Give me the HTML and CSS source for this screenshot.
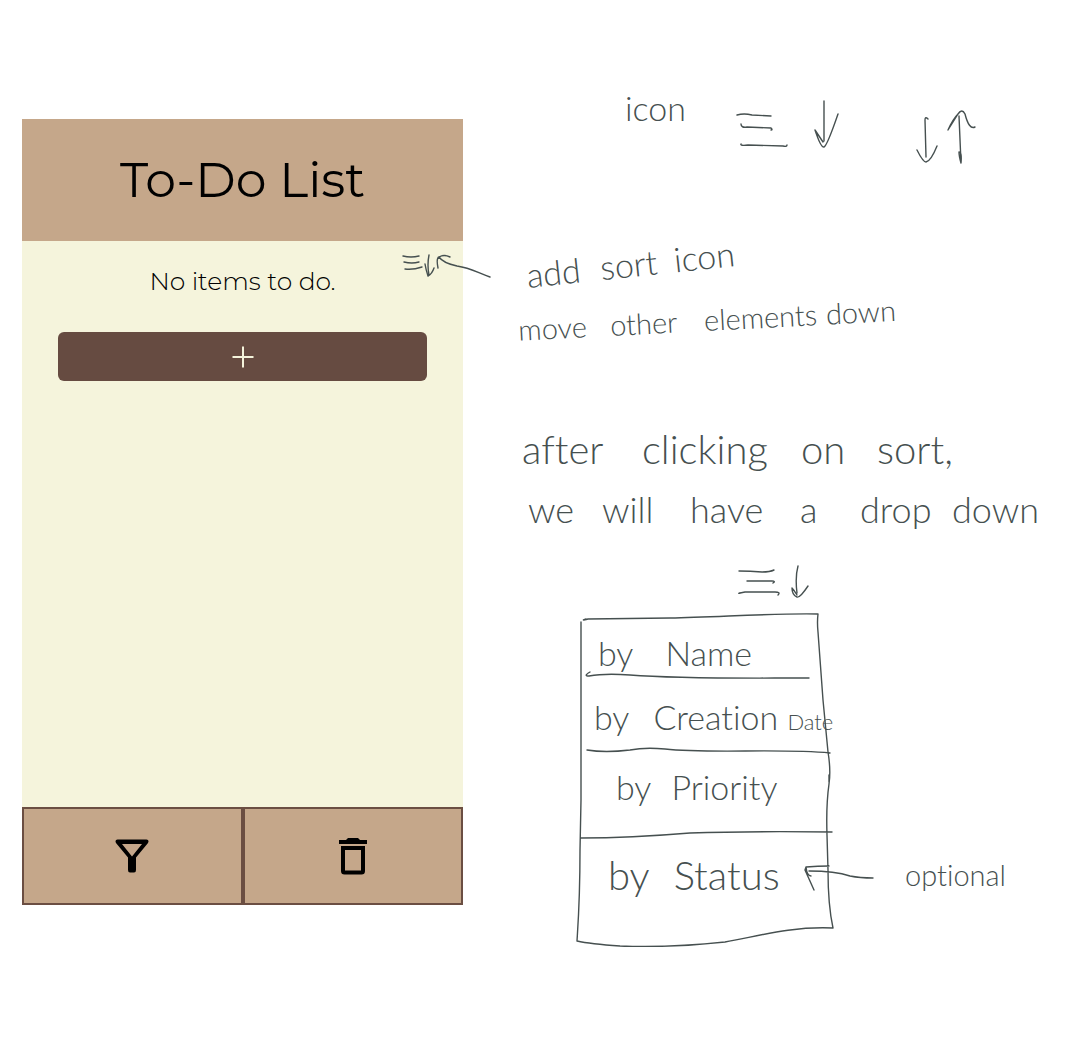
FILE: index.html
```html
<!DOCTYPE html>
<html lang="en">
<head>
<meta charset="utf-8">
<meta name="viewport" content="width=device-width, initial-scale=1">
<title>To-Do List</title>
<link rel="stylesheet" href="styles.css">
</head>
<body>
<main class="board">
  <section class="app">
    <header class="app-header"><h1>To-Do List</h1></header>
    <div class="app-body">
      <p class="empty">No items to do.</p>
      <button class="add" type="button" aria-label="Add item">
        <svg width="22" height="22" viewBox="0 0 22 22"><path d="M11 0.500V21.500M0.500 11H21.500" fill="none" stroke="#f5f4dc" stroke-width="2"/></svg>
      </button>
    </div>
    <footer class="app-footer">
      <button type="button" aria-label="Filter">
        <svg width="34" height="34" viewBox="0 0 34 34"><path fill-rule="evenodd" d="M2.500 0.500H31.500Q34.500 1 33 4L21 18.500V31Q21 33.500 19 33.500H15Q13 33.500 13 31V18.500L1 4Q-0.500 1 2.500 0.500ZM7 5L17 17.500L27 5Z"/></svg>
      </button>
      <button type="button" aria-label="Delete">
        <svg width="30" height="38" viewBox="0 0 30 38"><path fill-rule="evenodd" d="M1 3H8L10 1H20L22 3H29V7H1ZM3 9H27V34Q27 37.500 23.500 37.500H6.500Q3 37.500 3 34ZM7 13V33.500H23V13Z"/></svg>
      </button>
    </footer>
    <svg class="ink pointer" width="90" height="28" viewBox="402 252 90 28"><path d="M403 256Q411 258 419 256M404 262Q412 264 419 262M405 269Q413 270 422 267M429 255Q427 265 429 275M425 264Q426 270 428 276Q432 274 434 268M438 268Q436 258 439 257Q444 254 450 257M439 257Q443 263 457 266C471 268 478 273 490 277"/></svg>
  </section>

  <section class="notes">
    <div class="row-icons">
      <span class="hand medium">icon</span>
      <svg class="ink" width="242" height="70" viewBox="736 96 242 70"><path d="M737 115Q744 113 752 115L771 116M741 124Q741 128 747 127L771 128Q773 130 771 130M741 144Q740 146 748 145L783 146Q787 147 787 145M824 101V141M815 130L823 142M815 130Q821 148 824 147Q827 146 838 114M928 119Q925 116 925 120L926 157M917 150Q923 162 926 162Q931 161 937 146M961 163Q959 156 959 152Q962 152 961 163L959 116M948 130L958 114Q962 108 965 114Q969 130 975 127M948 130Q953 119 958 114"/></svg>
    </div>

    <div class="note note-add">
      <p class="hand medium line line-add"><span>add</span> <span>sort</span> <span>icon</span></p>
      <p class="hand small line line-move"><span>move</span> <span>other</span> <span>elements</span> <span>down</span></p>
    </div>

    <div class="note note-after">
      <p class="hand line line-after"><span>after</span> <span>clicking</span> <span>on</span> <span>sort,</span></p>
      <p class="hand line line-we"><span>we</span> <span>will</span> <span>have</span> <span>a</span> <span>drop</span> <span>down</span></p>
    </div>

    <svg class="ink sort-icon" width="72" height="36" viewBox="738 564 72 36"><path d="M739 571Q750 571 762 572Q770 572 774 570M747 581L772 581Q776 581 773 583M740 593Q736 594 745 592L775 592Q781 592 778 595M798 566Q795 577 797 593M792 588Q792 595 797 597Q800 598 808 586M792 588Q794 590 797 595"/></svg>

    <div class="dropdown">
      <ul class="menu">
        <li><button class="hand medium" type="button"><span>by</span> <span>Name</span></button></li>
        <li><button class="hand medium" type="button"><span>by</span> <span>Creation <small>Date</small></span></button></li>
        <li><button class="hand medium" type="button"><span>by</span> <span>Priority</span></button></li>
        <li><button class="hand" type="button"><span>by</span> <span>Status</span></button></li>
      </ul>
      <span class="hand small optional">optional</span>
      <svg class="ink frame" width="300" height="334" viewBox="576 613 300 334"><path d="M586 619Q580 621 588 619L670 618C720 617 775 613 818 614Q817 622 818 632L823 700L828 752Q831 770 829 784Q826 805 827 835L828 870Q828 905 833 928C790 926 755 937 725 942Q670 948 620 946Q590 944 577 941C578 925 580 900 580 850L581 800V622M590 672Q583 676 589 676Q605 673 630 675C680 679 740 678 809 678M587 750Q605 753 630 750Q645 747 665 749C710 754 780 748 830 753M581 838Q630 838 690 833Q750 831 832 832M829 775V782M829 866Q818 866 806 867L805 870L814 890M806 867Q807 876 811 876M809 871Q835 871 850 876Q860 878 873 878"/></svg>
    </div>
  </section>
</main>
</body>
</html>
```
FILE: styles.css
```css
* { box-sizing: border-box; }

body {
  margin: 0;
  background: #fff;
  color: #000;
  font-family: Montserrat, Inter, "Liberation Sans", sans-serif;
}

h1, p, ul { margin: 0; padding: 0; }

button {
  border: 0;
  background: none;
  color: inherit;
  font: inherit;
  cursor: pointer;
}

svg { display: block; flex: none; }

.board {
  display: grid;
  grid-template-columns: 441fr 613fr;
  min-height: 100vh;
  padding-left: 22px;
}

/* App window */
.app {
  position: relative;
  display: flex;
  flex-direction: column;
  margin: 119px 0 159px;
  background: #f5f4dc;
}

.app-header {
  padding: 30px 16px;
  background: #c5a78a;
  text-align: center;
}

.app-header h1 {
  font-size: 49px;
  font-weight: 400;
  line-height: 62px;
}

.app-body {
  flex: 1;
  padding: 24px 36px;
}

.empty {
  font-size: 25px;
  font-weight: 300;
  line-height: 32px;
  text-align: center;
}

.add {
  display: flex;
  align-items: center;
  justify-content: center;
  width: 100%;
  height: 49px;
  margin-top: 35px;
  border-radius: 6px;
  background: #664b41;
}

.app-footer {
  display: grid;
  grid-template-columns: 1fr 1fr;
  gap: 4px;
  padding: 2px;
  background: #6b4e42;
}

.app-footer button {
  display: flex;
  align-items: center;
  justify-content: center;
  height: 94px;
  background: #c5a78a;
}

/* Handwritten notes */
.ink {
  fill: none;
  stroke: #465050;
  stroke-width: 1.400;
  stroke-linecap: round;
  stroke-linejoin: round;
}

.pointer {
  position: absolute;
  top: 133px;
  right: -29px;
}

.hand {
  color: #465050;
  font-family: Lato, "Open Sans", sans-serif;
  font-size: 40px;
  font-weight: 300;
  font-variant-ligatures: none;
  line-height: 60px;
  white-space: nowrap;
}

.hand.medium {
  font-size: 34px;
  line-height: 56px;
}

.hand.small {
  font-size: 29px;
  line-height: 56px;
}

.notes {
  display: flex;
  flex-direction: column;
  align-items: flex-start;
  padding: 76px 0 0 55px;
}

.row-icons {
  display: flex;
  gap: 50px;
  padding: 4px 0 0 107px;
}

.row-icons .ink { margin-top: 16px; }

.note-add { margin-top: 70px; }

.note-after { margin-top: 71px; }

/* Each word starts its own column */
.line { display: grid; }

.line-add {
  grid-template-columns: 74px 74px 64px;
  width: 212px;
  margin-left: 8px;
  transform: rotate(-6deg);
}

.line-move {
  grid-template-columns: 92px 94px 122px 68px;
  transform: rotate(-3deg);
}

.line-after {
  grid-template-columns: 120px 159px 76px auto;
  margin-left: 4px;
}

.hand.line-we {
  grid-template-columns: 74px 88px 110px 60px 92px auto;
  margin-left: 10px;
  font-size: 36px;
}

.sort-icon { margin: 25px 0 0 220px; }

.dropdown {
  position: relative;
  display: flex;
  align-items: flex-end;
  gap: 76px;
  margin: 13px 0 0 58px;
}

.menu {
  display: grid;
  grid-template-rows: 64px 74px 82px 114px;
  width: 253px;
  list-style: none;
}

.menu button {
  display: flex;
  gap: 32px;
  width: 100%;
  padding: 12px 0 0 22px;
  text-align: left;
}

.menu li:nth-child(2) button { gap: 24px; padding-left: 18px; }
.menu li:nth-child(3) button { gap: 20px; padding: 8px 0 0 40px; }
.menu li:nth-child(4) button { gap: 24px; padding-left: 32px; }

.menu small { font-size: 22px; }

.optional { margin-bottom: 44px; }

.frame {
  position: absolute;
  top: 0;
  left: 0;
}
```
